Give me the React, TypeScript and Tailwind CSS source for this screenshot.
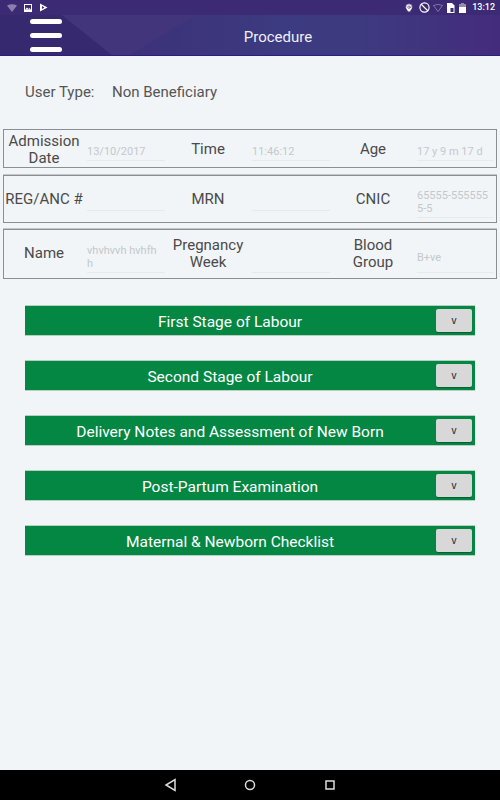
import { Ban, MapPin } from "lucide-react";

const rows = [
  {
    box: "min-h-[24px]",
    frame: "h-[39px]",
    label: "pt-[2px]",
    cells: [
      ["Admission Date", "13/10/2017"],
      ["Time", "11:46:12"],
      ["Age", "17 y 9 m 17 d"],
    ],
  },
  {
    box: "min-h-[24px]",
    frame: "h-[48px] mt-[7px] shadow-[0_-1px_0_#c4c8ca]",
    label: "pt-[1px]",
    cells: [
      ["REG/ANC #", ""],
      ["MRN", ""],
      ["CNIC", "65555-5555555-5"],
    ],
  },
  {
    box: "min-h-[37px]",
    frame: "h-[50px] mt-[6px] shadow-[0_-1px_0_#c4c8ca]",
    label: "pb-[1px]",
    cells: [
      ["Name", "vhvhvvh hvhfhh"],
      ["Pregnancy Week", ""],
      ["Blood Group", "B+ve"],
    ],
  },
];

const sections = [
  "First Stage of Labour",
  "Second Stage of Labour",
  "Delivery Notes and Assessment of New Born",
  "Post-Partum Examination",
  "Maternal & Newborn Checklist",
];

function StatusBar() {
  return (
    <div className="h-[15px] bg-[#3c2b74] flex items-center pl-[7px] pr-[5px] text-white">
      <svg width="10" height="8" viewBox="0 0 10 8" className="opacity-40">
        <path d="M0 1.5Q5 -1 10 1.5L5 8Z" fill="#fff" />
      </svg>
      <svg width="8" height="8" viewBox="0 0 8 8" className="ml-[7px]">
        <path d="M0 0H8V8H0Z M1 1V5.5H7V1Z" fill="#fff" fillRule="evenodd" />
        <path d="M1 5.5L3 3.5L4.5 5L5.5 4L7 5.5Z" fill="#fff" />
      </svg>
      <svg width="9" height="9" viewBox="0 0 9 9" className="ml-[7px]">
        <path d="M1 0.5L8.5 4.5L1 8.5Z" fill="#fff" />
        <path d="M3 3L5.5 4.5L3 6Z" fill="#3c2b74" />
      </svg>
      <div className="ml-auto flex items-center">
        <MapPin size={10} fill="#fff" stroke="#3c2b74" strokeWidth={1.5} />
        <Ban size={11} strokeWidth={2.5} className="ml-[5px]" />
        <svg width="10" height="8" viewBox="0 0 10 8" className="ml-[3px] opacity-50">
          <path d="M0.5 1.5Q5 -0.8 9.500 1.5L5 7.500Z" fill="none" stroke="#fff" strokeWidth="0.7" />
        </svg>
        <svg width="8" height="10" viewBox="0 0 8 10" className="ml-[4px]">
          <path d="M0 0H5L7.500 2.500V10H0Z" fill="#fff" />
          <rect x="3.500" y="5" width="3" height="4" fill="#3c2b74" />
        </svg>
        <svg width="7" height="10" viewBox="0 0 7 10" className="ml-[4px]">
          <path d="M2 0H5V1H7V10H0V1H2Z" fill="#fff" fillOpacity="0.45" />
          <rect y="4" width="7" height="6" fill="#fff" />
        </svg>
        <span className="ml-[6px] text-[9px] leading-none font-medium">13:12</span>
      </div>
    </div>
  );
}

function Header() {
  return (
    <div className="relative h-[41px] bg-[linear-gradient(90deg,#3c2a72_0%,#3c3a80_55%,#3d3a80_72%,#442c7c_100%)] border-b border-[#2a1d8a] flex items-center justify-center overflow-hidden">
      {/* faint shapes behind the title */}
      <svg viewBox="0 0 500 40" className="absolute inset-0 w-full h-full" preserveAspectRatio="none">
        <path d="M0 0H62L112 40H0Z" fill="#37296f" />
        <path d="M62 0H195L130 40H112Z" fill="#43357c" />
      </svg>
      <button className="absolute left-[30px] top-[4px] flex flex-col gap-[9.500px]">
        <span className="block w-[32px] h-[4.500px] bg-white rounded-full" />
        <span className="block w-[32px] h-[4.500px] bg-white rounded-full" />
        <span className="block w-[32px] h-[4.500px] bg-white rounded-full" />
      </button>
      <span className="relative text-[15px] text-[#eef0fa] mt-[5px] ml-[56px]">Procedure</span>
    </div>
  );
}

export default function App() {
  return (
    <div className="w-[500px] h-[800px] flex flex-col bg-[#f1f5f8] font-['Roboto',sans-serif] overflow-hidden">
      <StatusBar />
      <Header />

      <div className="flex-1 flex flex-col">
        <div className="flex items-center h-[20px] mt-[26px] pl-[25px] text-[15px] text-[#555]">
          <span className="w-[87px]">User Type:</span>
          <span>Non Beneficiary</span>
        </div>

        <div className="mt-[27px] mx-[3px] flex flex-col">
          {rows.map((row, i) => (
            <div
              key={i}
              className={`grid grid-cols-[80px_83px_82px_83px_82px_82px] border border-[#8a8f92] ${row.frame}`}
            >
              {row.cells.map(([label, value]) => (
                <Cell key={label} label={label} value={value} box={row.box} labelClass={row.label} />
              ))}
            </div>
          ))}
        </div>

        <div className="mt-[26px] mx-[25px] flex flex-col gap-[24px]">
          {sections.map((title) => (
            <div
              key={title}
              className="relative h-[31px] bg-[#058744] border-y border-[#b5cfc0] flex items-center justify-center pr-[40px] pt-[4px]"
            >
              <span className="text-white text-[15.500px] leading-none">{title}</span>
              <button className="absolute right-[3px] top-[3px] w-[36px] h-[23px] bg-[#d8d8d8] rounded-[2px] shadow-[0_1px_1px_rgba(0,0,0,0.3)] text-[10px] leading-none font-['Liberation_Sans',sans-serif] text-[#222]">
                v
              </button>
            </div>
          ))}
        </div>
      </div>

      <div className="h-[30px] bg-black flex items-center justify-center gap-[60px] text-[#ddd]">
        <svg width="20" height="14" viewBox="0 0 20 14" fill="none" stroke="currentColor" strokeWidth="1.500">
          <path d="M15 1.500V12.500L6 7Z" />
        </svg>
        <svg width="20" height="14" viewBox="0 0 20 14" fill="none" stroke="currentColor" strokeWidth="1.500">
          <circle cx="10" cy="7" r="4.500" />
        </svg>
        <svg width="20" height="14" viewBox="0 0 20 14" fill="none" stroke="currentColor" strokeWidth="1.500">
          <rect x="6" y="3" width="8" height="8" />
        </svg>
      </div>
    </div>
  );
}

function Cell({
  label,
  value,
  box,
  labelClass,
}: {
  label: string;
  value: string;
  box: string;
  labelClass: string;
}) {
  return (
    <>
      <div className={`flex items-center justify-center text-center text-[15px] leading-[17px] text-[#4a4a4a] ${labelClass}`}>
        {label}
      </div>
      <div className="flex items-center ml-[3px] mr-[2px]">
        <div className={`w-full flex items-center pt-[9px] pb-[2px] pr-[3px] border-b border-[#e6eaed] ${box}`}>
          <span className="text-[11px] leading-[13px] text-[#c4c8ca] break-all">{value}</span>
        </div>
      </div>
    </>
  );
}
